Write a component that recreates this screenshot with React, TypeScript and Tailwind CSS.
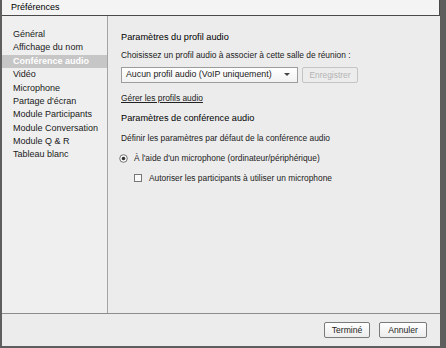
const items = [
  "Général",
  "Affichage du nom",
  "Conférence audio",
  "Vidéo",
  "Microphone",
  "Partage d'écran",
  "Module Participants",
  "Module Conversation",
  "Module Q & R",
  "Tableau blanc",
];

const App = () => {
  return (
    <div
      className="w-[446px] h-[348px] bg-[#5e5e5e] flex flex-col text-[#1e1e1e]"
      style={{ fontFamily: '"Liberation Sans", Arial, sans-serif' }}
    >
      <div className="ml-[2px] mr-[6px] mb-[2px] flex-1 flex flex-col bg-[#ececec]">
        {/* Title bar */}
        <div className="h-[16px] bg-[#f4f4f4] border-b border-r border-[#4a4a4a] flex items-center pl-[9px] text-[9px] text-black">
          Préférences
        </div>

        <div className="flex-1 flex">
          {/* Sidebar */}
          <div className="w-[106px] bg-[#efefef] border-r border-[#a4a4a4] pt-[12px]">
            {items.map((item) => (
              <div
                key={item}
                className={`h-[13.4px] flex items-center pl-[11px] text-[9px] ${
                  item === "Conférence audio"
                    ? "bg-[#c6c6c6] text-white font-bold"
                    : "text-[#1a1a1a]"
                }`}
              >
                {item}
              </div>
            ))}
          </div>

          {/* Content */}
          <div className="flex-1 pl-[13px] pt-[14px] text-[8.4px] text-[#222]">
            <div className="text-[9.2px] text-black leading-[14px]">
              Paramètres du profil audio
            </div>
            <div className="mt-[5px] leading-[12px]">
              Choisissez un profil audio à associer à cette salle de réunion :
            </div>
            <div className="mt-[6px] flex items-center gap-[4px]">
              <div className="w-[177px] h-[16px] border border-[#9c9c9c] bg-gradient-to-b from-white to-[#f2f2f2] flex items-center justify-between pl-[4px] pr-[7px] text-[8.8px] text-[#222]">
                <span>Aucun profil audio (VoIP uniquement)</span>
                <svg width="6" height="4" viewBox="0 0 6 4">
                  <path d="M0 0 L6 0 L3 3 Z" fill="#444" />
                </svg>
              </div>
              <div className="w-[56px] h-[16px] border border-[#c4c4c4] rounded-[2px] flex items-center justify-center text-[#b4b4b4] text-[8.4px]">
                Enregistrer
              </div>
            </div>
            <div className="mt-[9px] underline leading-[12px] text-[#222]">
              Gérer les profils audio
            </div>
            <div className="mt-[7px] text-[9.2px] text-black leading-[14px]">
              Paramètres de conférence audio
            </div>
            <div className="mt-[7px] leading-[12px]">
              Définir les paramètres par défaut de la conférence audio
            </div>
            <div className="mt-[8px] flex items-center gap-[6px] leading-[12px] -ml-[2px]">
              <svg width="9" height="9" viewBox="0 0 9 9">
                <circle cx="4.5" cy="4.5" r="3.8" fill="#fafafa" stroke="#666" strokeWidth="0.9" />
                <circle cx="4.5" cy="4.5" r="1.8" fill="#333" />
              </svg>
              <span>À l'aide d'un microphone (ordinateur/périphérique)</span>
            </div>
            <div className="mt-[8px] ml-[13px] flex items-center gap-[7px] leading-[12px]">
              <div className="w-[8px] h-[8px] border border-[#777] bg-[#fafafa]" />
              <span>Autoriser les participants à utiliser un microphone</span>
            </div>
          </div>
        </div>

        {/* Footer */}
        <div className="h-[33px] border-t border-[#8c8c8c] flex items-center justify-end gap-[9px] pr-[13px]">
          <button className="w-[46px] h-[16px] border border-[#7a7a7a] rounded-[2px] bg-gradient-to-b from-white to-[#ececec] text-[8.6px] text-[#222]">
            Terminé
          </button>
          <button className="w-[48px] h-[16px] border border-[#7a7a7a] rounded-[2px] bg-gradient-to-b from-white to-[#ececec] text-[8.6px] text-[#222]">
            Annuler
          </button>
        </div>
      </div>
    </div>
  );
};

export default App;
